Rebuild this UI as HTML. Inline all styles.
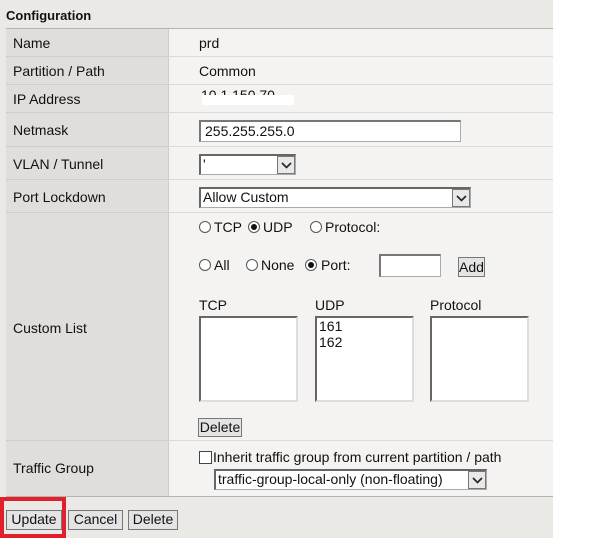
<!DOCTYPE html>
<html><head><meta charset="utf-8"><style>
*{margin:0;padding:0;box-sizing:border-box}
body{width:600px;height:538px;background:#fff;font-family:"Liberation Sans",Arial,sans-serif;font-size:14px;color:#111;position:relative;overflow:hidden}
.a{position:absolute;white-space:nowrap}
.bg{position:absolute;left:0;top:0;width:553px;height:538px;background:#ebe9e6}
.lab{position:absolute;left:6px;width:162px;background:#e0dedb;border-bottom:1px solid #cfcdca}
.val{position:absolute;left:168px;width:385px;background:#f4f3f1;border-bottom:1px solid #dcdad7;border-left:1px solid #cfcdca}
.t{position:absolute;left:13px}
.inp{position:absolute;background:#fff;border:1px solid #aaa;border-top:2px solid #777;border-left:2px solid #777}
.sel{position:absolute;background:#fff;border:1px solid #aaa;border-top:2px solid #666;border-left:2px solid #666}
.arr{position:absolute;right:0;top:0;bottom:0;width:18px;background:#e8e8e8;border:1px solid #777}
.arr svg{position:absolute;left:3px;top:4px}
.rad{position:absolute;width:12px;height:12px;border:1px solid #555;border-radius:50%;background:#fff}
.rad.on:after{content:"";position:absolute;left:2px;top:2px;width:6px;height:6px;border-radius:50%;background:#111}
.btn{position:absolute;background:#e4e4e4;border:1px solid #777;font-size:14px;text-align:center;line-height:17px}
.lb{position:absolute;background:#fff;border-top:2px solid #666;border-left:2px solid #666;border-right:2px solid #ddd;border-bottom:2px solid #ddd;padding:0 2px;line-height:16px}
</style></head><body>
<div class="bg"></div>
<div class="a" style="left:6px;top:8px;font-weight:bold;font-size:13px">Configuration</div>
<div class="a" style="left:6px;top:28px;width:547px;height:1px;background:#b5b3b0"></div>
<div class="a" style="left:6px;top:28px;width:1px;height:469px;background:#b5b3b0"></div>

<div class="lab" style="top:29px;height:28px"></div><div class="val" style="top:29px;height:28px"></div>
<div class="lab" style="top:57px;height:28px"></div><div class="val" style="top:57px;height:28px"></div>
<div class="lab" style="top:85px;height:28px"></div><div class="val" style="top:85px;height:28px"></div>
<div class="lab" style="top:113px;height:34px"></div><div class="val" style="top:113px;height:34px"></div>
<div class="lab" style="top:147px;height:33px"></div><div class="val" style="top:147px;height:33px"></div>
<div class="lab" style="top:180px;height:33px"></div><div class="val" style="top:180px;height:33px"></div>
<div class="lab" style="top:213px;height:228px"></div><div class="val" style="top:213px;height:228px"></div>
<div class="lab" style="top:441px;height:56px;border-bottom:1px solid #b5b3b0"></div><div class="val" style="top:441px;height:56px;border-bottom:1px solid #b5b3b0"></div>

<div class="a t" style="top:35px">Name</div>
<div class="a t" style="top:63px">Partition / Path</div>
<div class="a t" style="top:91px">IP Address</div>
<div class="a t" style="top:122px">Netmask</div>
<div class="a t" style="top:156px">VLAN / Tunnel</div>
<div class="a t" style="top:189px">Port Lockdown</div>
<div class="a t" style="top:320px">Custom List</div>
<div class="a t" style="top:460px">Traffic Group</div>

<div class="a" style="left:199px;top:35px">prd</div>
<div class="a" style="left:199px;top:63px">Common</div>
<div class="a" style="left:201px;top:87px">10.1.150.70</div>
<div class="a" style="left:202px;top:95px;width:92px;height:10px;background:#fff"></div>

<div class="inp" style="left:199px;top:120px;width:262px;height:22px"><span class="a" style="left:4px;top:1px">255.255.255.0</span></div>

<div class="sel" style="left:199px;top:154px;width:97px;height:21px"><span class="a" style="left:2px;top:0">'</span><div class="arr"><svg width="11" height="9"><path d="M1 2l4.5 4.5L10 2" stroke="#222" stroke-width="1.6" fill="none"/></svg></div></div>
<div class="sel" style="left:199px;top:187px;width:272px;height:21px"><span class="a" style="left:2px;top:0">Allow Custom</span><div class="arr"><svg width="11" height="9"><path d="M1 2l4.5 4.5L10 2" stroke="#222" stroke-width="1.6" fill="none"/></svg></div></div>

<div class="rad" style="left:199px;top:221px"></div><div class="a" style="left:214px;top:219px">TCP</div>
<div class="rad on" style="left:248px;top:221px"></div><div class="a" style="left:263px;top:219px">UDP</div>
<div class="rad" style="left:310px;top:221px"></div><div class="a" style="left:325px;top:219px">Protocol:</div>

<div class="rad" style="left:199px;top:259px"></div><div class="a" style="left:214px;top:257px">All</div>
<div class="rad" style="left:246px;top:259px"></div><div class="a" style="left:261px;top:257px">None</div>
<div class="rad on" style="left:305px;top:259px"></div><div class="a" style="left:321px;top:257px">Port:</div>
<div class="inp" style="left:379px;top:254px;width:62px;height:23px"></div>
<div class="btn" style="left:458px;top:257px;width:27px;height:20px;line-height:18px">Add</div>

<div class="a" style="left:199px;top:297px">TCP</div>
<div class="a" style="left:315px;top:297px">UDP</div>
<div class="a" style="left:430px;top:297px">Protocol</div>
<div class="lb" style="left:199px;top:316px;width:99px;height:86px"></div>
<div class="lb" style="left:315px;top:316px;width:99px;height:86px">161<br>162</div>
<div class="lb" style="left:430px;top:316px;width:99px;height:86px"></div>
<div class="btn" style="left:198px;top:418px;width:44px;height:19px">Delete</div>

<div class="a" style="left:199px;top:451px;width:13px;height:13px;border:1px solid #444;background:#fff"></div>
<div class="a" style="left:213px;top:449px">Inherit traffic group from current partition / path</div>
<div class="sel" style="left:214px;top:469px;width:273px;height:21px"><span class="a" style="left:2px;top:0">traffic-group-local-only (non-floating)</span><div class="arr"><svg width="11" height="9"><path d="M1 2l4.5 4.5L10 2" stroke="#222" stroke-width="1.6" fill="none"/></svg></div></div>

<div class="btn" style="left:6px;top:510px;width:56px;height:20px">Update</div>
<div class="btn" style="left:68px;top:510px;width:55px;height:20px">Cancel</div>
<div class="btn" style="left:128px;top:510px;width:50px;height:20px">Delete</div>
<div class="a" style="left:0;top:497px;width:66px;height:41px;border:4px solid #e0202a"></div>
</body></html>
